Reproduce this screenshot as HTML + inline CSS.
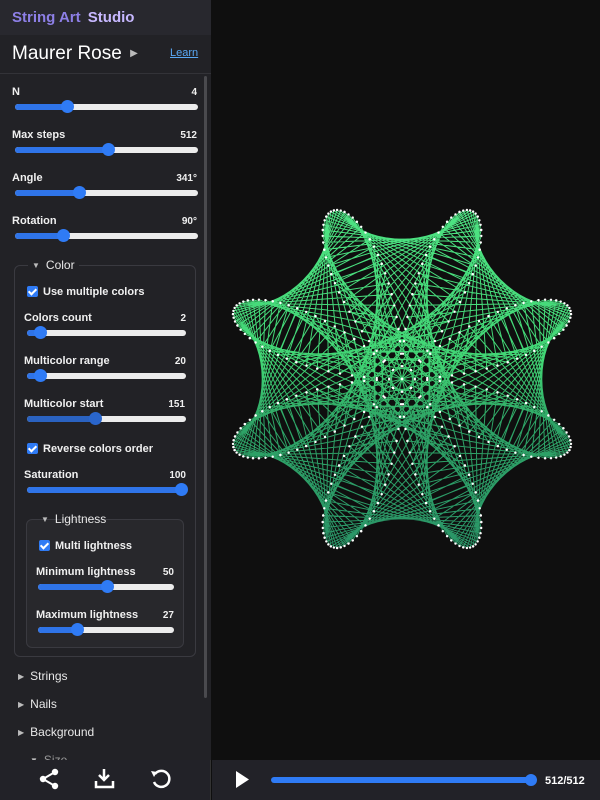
<!DOCTYPE html>
<html><head><meta charset="utf-8"><style>
*{box-sizing:border-box;margin:0;padding:0}
body{width:600px;height:800px;overflow:hidden;background:#0f0f0f;font-family:"Liberation Sans",sans-serif;color:#fff;position:relative}
.side{position:absolute;left:0;top:0;width:211px;height:760px;background:#222226;overflow:hidden}
.hdr{position:absolute;left:0;top:0;width:211px;height:35px;background:#28282e}
.a{position:absolute}
.lbl{position:absolute;font-size:11px;font-weight:bold;color:#f0f0f0}
.val{position:absolute;font-size:10px;font-weight:bold;color:#f0f0f0;text-align:right}
.tr{position:absolute;height:6px;border-radius:3px;background:#ececec}
.fill{position:absolute;left:0;top:0;height:6px;border-radius:3px;background:#2f74e8}
.th{position:absolute;width:13px;height:13px;border-radius:50%;background:#2f7bf5;top:-4px;margin-left:-6px}
.cb{position:absolute;width:11px;height:11px;border-radius:2px;background:#2f7bf5}
.cb:after{content:"";position:absolute;left:3px;top:0.5px;width:3px;height:6px;border:solid #fff;border-width:0 2px 2px 0;transform:rotate(45deg)}
.box{position:absolute;border:1px solid #3a3a40;border-radius:6px}
.sec{position:absolute;font-size:12px;color:#e8e8e8}
.tri{font-size:8px;color:#bbb;margin-right:6px;vertical-align:1px}
</style></head><body>
<div class="side">
<div class="hdr"></div>
<div class="a" style="left:12px;top:9px;font-size:15px;font-weight:bold;color:#8d7fe6">String Art <span style="color:#c7b8ff;margin-left:3px">Studio</span></div>
<div class="a" style="left:12px;top:43px;font-size:19px;color:#fff">Maurer Rose <span style="font-size:10px;color:#bbb;vertical-align:3px;margin-left:3px">▶</span></div>
<div class="a" style="left:170px;top:47px;font-size:11px;color:#5aa9f5;text-decoration:underline">Learn</div>
<div class="a" style="left:0;top:73px;width:211px;height:1px;background:#333338"></div>
<div class="a" style="left:204px;top:76px;width:3px;height:622px;background:#4a4a4e;border-radius:2px"></div>

<div class="lbl" style="left:12px;top:86px">N</div><div class="val" style="right:14px;top:87px">4</div>
<div class="tr" style="left:15px;top:104px;width:183px"><div class="fill" style="width:52px"></div><div class="th" style="left:52px"></div></div>
<div class="lbl" style="left:12px;top:129px">Max steps</div><div class="val" style="right:14px;top:130px">512</div>
<div class="tr" style="left:15px;top:147px;width:183px"><div class="fill" style="width:93px"></div><div class="th" style="left:93px"></div></div>
<div class="lbl" style="left:12px;top:172px">Angle</div><div class="val" style="right:14px;top:173px">341°</div>
<div class="tr" style="left:15px;top:190px;width:183px"><div class="fill" style="width:64px"></div><div class="th" style="left:64px"></div></div>
<div class="lbl" style="left:12px;top:215px">Rotation</div><div class="val" style="right:14px;top:216px">90°</div>
<div class="tr" style="left:15px;top:233px;width:183px"><div class="fill" style="width:48px"></div><div class="th" style="left:48px"></div></div>

<div class="box" style="left:14px;top:265px;width:182px;height:392px"></div>
<div class="sec" style="left:28px;top:258px;background:#222226;padding:0 4px"><span class="tri">▼</span>Color</div>
<div class="cb" style="left:27px;top:286px"></div><div class="lbl" style="left:43px;top:286px">Use multiple colors</div>
<div class="lbl" style="left:24px;top:312px">Colors count</div><div class="val" style="right:25px;top:313px">2</div>
<div class="tr" style="left:27px;top:330px;width:159px"><div class="fill" style="width:13px"></div><div class="th" style="left:13px"></div></div>
<div class="lbl" style="left:24px;top:355px">Multicolor range</div><div class="val" style="right:25px;top:356px">20</div>
<div class="tr" style="left:27px;top:373px;width:159px"><div class="fill" style="width:13px"></div><div class="th" style="left:13px"></div></div>
<div class="lbl" style="left:24px;top:398px">Multicolor start</div><div class="val" style="right:26px;top:399px">151</div>
<div class="tr" style="left:27px;top:416px;width:159px"><div class="fill" style="width:68px;background:#2a62c0"></div><div class="th" style="left:68px;background:#2a66cc"></div></div>
<div class="cb" style="left:27px;top:443px"></div><div class="lbl" style="left:43px;top:443px">Reverse colors order</div>
<div class="lbl" style="left:24px;top:469px">Saturation</div><div class="val" style="right:25px;top:470px">100</div>
<div class="tr" style="left:27px;top:487px;width:159px"><div class="fill" style="width:154px"></div><div class="th" style="left:154px"></div></div>

<div class="box" style="left:26px;top:519px;width:158px;height:129px;background:#28282c"></div>
<div class="sec" style="left:38px;top:512px;padding:0 3px"><span class="tri">▼</span>Lightness</div>
<div class="cb" style="left:39px;top:540px"></div><div class="lbl" style="left:55px;top:540px">Multi lightness</div>
<div class="lbl" style="left:36px;top:566px">Minimum lightness</div><div class="val" style="right:37px;top:567px">50</div>
<div class="tr" style="left:38px;top:584px;width:136px"><div class="fill" style="width:69px"></div><div class="th" style="left:69px"></div></div>
<div class="lbl" style="left:36px;top:609px">Maximum lightness</div><div class="val" style="right:37px;top:610px">27</div>
<div class="tr" style="left:38px;top:627px;width:136px"><div class="fill" style="width:39px"></div><div class="th" style="left:39px"></div></div>

<div class="sec" style="left:18px;top:669px"><span class="tri">▶</span>Strings</div>
<div class="sec" style="left:18px;top:697px"><span class="tri">▶</span>Nails</div>
<div class="sec" style="left:18px;top:725px"><span class="tri">▶</span>Background</div>
<div class="sec" style="left:30px;top:753px;color:#999"><span class="tri">▼</span>Size</div>
</div>

<div class="a" style="left:0;top:760px;width:211px;height:40px;background:#222228;border-right:1px solid #333"></div>
<div class="a" style="left:212px;top:760px;width:388px;height:40px;background:#222228"></div>
<svg class="a" style="left:0;top:760px" width="600" height="40">
<g fill="#fff" stroke="#fff">
<circle cx="55" cy="12" r="3.2" stroke="none"/><circle cx="43" cy="19" r="3.2" stroke="none"/><circle cx="55" cy="26" r="3.2" stroke="none"/>
<path d="M55 12L43 19L55 26" fill="none" stroke-width="2"/>
<path d="M104 9v11M99 15l5 5 5-5" fill="none" stroke-width="2.5"/>
<path d="M96 21v6h17v-6" fill="none" stroke-width="2.5"/>
<path d="M155 14a8 8 0 1 1 -1 8" fill="none" stroke-width="2.5"/>
<path d="M151 11l6 1 -3 5z" stroke="none"/>
<path d="M236 11v17l13-8.5z" stroke="none"/>
</g>
<rect x="271" y="17" width="262" height="6" rx="3" fill="#2f7bf5"/>
<circle cx="531" cy="20" r="6" fill="#2f7bf5"/>
<text x="545" y="24" font-family="Liberation Sans" font-size="11" font-weight="bold" fill="#fff">512/512</text>
</svg>

<svg id="rose" class="a" style="left:212px;top:0" width="388" height="760">
<defs><linearGradient id="g" gradientUnits="userSpaceOnUse" x1="0" y1="195" x2="0" y2="565">
<stop offset="0" stop-color="#52f08a"/><stop offset="0.45" stop-color="#44e07a"/><stop offset="0.62" stop-color="#2fab6a"/><stop offset="1" stop-color="#2b9a6c"/></linearGradient></defs>
<path id="lines" fill="none" stroke="url(#g)" stroke-width="1" opacity="0.95"/>
<g id="dots" fill="#fff"></g>
</svg>
<script>
(function(){
var cx=190,cy=379,R=182,n=4,d=239*Math.PI/180,N=512,pts=[];
for(var k=0;k<=N;k++){var t=k*d;var r=R*Math.sin(n*t);var a=t+Math.PI/2;pts.push([cx+r*Math.cos(a),cy-r*Math.sin(a)]);}
var s="M"+pts[0][0].toFixed(1)+" "+pts[0][1].toFixed(1);
for(var i=1;i<pts.length;i++)s+="L"+pts[i][0].toFixed(1)+" "+pts[i][1].toFixed(1);
document.getElementById("lines").setAttribute("d",s);
var g=document.getElementById("dots"),h="";
for(var i=0;i<pts.length;i++)h+='<circle cx="'+pts[i][0].toFixed(1)+'" cy="'+pts[i][1].toFixed(1)+'" r="1.2"/>';
g.innerHTML=h;
})();
</script>
</body></html>
